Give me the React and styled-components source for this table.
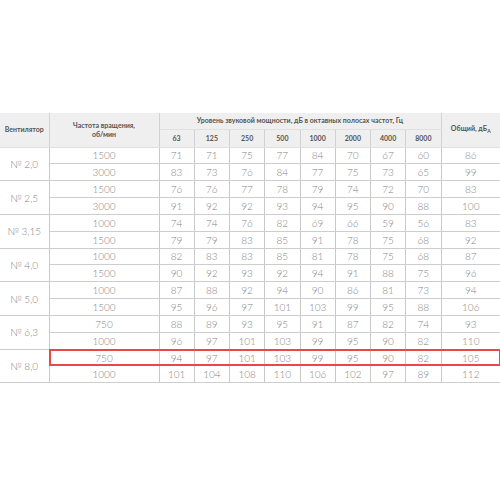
import React from "react";
import styled, { createGlobalStyle, css } from "styled-components";

const Global = createGlobalStyle`
  html, body { margin: 0; padding: 0; background: #ffffff; }
  body { font-family: Lato, "Open Sans", sans-serif; }
`;

const Page = styled.div`
  width: 500px;
  height: 500px;
  padding-top: 113px;
  box-sizing: border-box;
  background: #fff;
`;

const Table = styled.table`
  width: 500px;
  border-collapse: collapse;
  table-layout: fixed;
  font-family: Lato, "Open Sans", sans-serif;
`;

const HeadCell = styled.th`
  background: #efefef;
  color: #555;
  font-size: 7px;
  font-weight: 700;
  line-height: 9px;
  text-align: center;
  vertical-align: middle;
  padding: 0 2px;
  border-left: 1px solid #d2d2d2;
  border-right: 1px solid #d2d2d2;
  border-bottom: 1px solid #e0e0e0;
  &:first-child { border-left: none; }
  &:last-child { border-right: none; }
  ${(p) => p.$edge && css`border-right: 1px solid #d2d2d2; border-left: 1px solid #d2d2d2;`}
`;

const HeadRow = styled.tr`
  height: ${(p) => p.$h}px;
`;

const Row = styled.tr`
  height: 16.85px;
`;

const Cell = styled.td`
  color: #858585;
  font-size: 10px;
  font-weight: 300;
  line-height: 12px;
  text-align: center;
  vertical-align: middle;
  padding: 0;
  border-left: 1px solid #c8c8c8;
  border-right: 1px solid #c8c8c8;
  border-bottom: 1px solid #cdcdcd;
  &:last-child { border-right: none; }
  ${(p) =>
    p.$mark &&
    css`
      position: relative;
      &::after {
        content: "";
        position: absolute;
        left: -1px;
        top: -1px;
        bottom: -1px;
        width: 452px;
        border: 2px solid #e8484b;
        box-sizing: border-box;
        pointer-events: none;
        z-index: 1;
      }
    `}
`;

const FanCell = styled.td`
  color: #858585;
  font-size: 10px;
  font-weight: 300;
  text-align: center;
  vertical-align: middle;
  padding: 0;
  border-right: 1px solid #c8c8c8;
  border-bottom: 1px solid #cdcdcd;
  white-space: nowrap;
`;

const Sub = styled.sub`
  font-size: 5px;
  vertical-align: -2px;
`;

const freqs = ["63", "125", "250", "500", "1000", "2000", "4000", "8000"];

const groups = [
  {
    fan: "№ 2,0",
    rows: [
      ["1500", [71, 71, 75, 77, 84, 70, 67, 60], 86],
      ["3000", [83, 73, 76, 84, 77, 75, 73, 65], 99],
    ],
  },
  {
    fan: "№ 2,5",
    rows: [
      ["1500", [76, 76, 77, 78, 79, 74, 72, 70], 83],
      ["3000", [91, 92, 92, 93, 94, 95, 90, 88], 100],
    ],
  },
  {
    fan: "№ 3,15",
    rows: [
      ["1000", [74, 74, 76, 82, 69, 66, 59, 56], 83],
      ["1500", [79, 79, 83, 85, 91, 78, 75, 68], 92],
    ],
  },
  {
    fan: "№ 4,0",
    rows: [
      ["1000", [82, 83, 83, 85, 81, 78, 75, 68], 87],
      ["1500", [90, 92, 93, 92, 94, 91, 88, 75], 96],
    ],
  },
  {
    fan: "№ 5,0",
    rows: [
      ["1000", [87, 88, 92, 94, 90, 86, 81, 73], 94],
      ["1500", [95, 96, 97, 101, 103, 99, 95, 88], 106],
    ],
  },
  {
    fan: "№ 6,3",
    rows: [
      ["750", [88, 89, 93, 95, 91, 87, 82, 74], 93],
      ["1000", [96, 97, 101, 103, 99, 95, 90, 82], 110],
    ],
  },
  {
    fan: "№ 8,0",
    rows: [
      ["750", [94, 97, 101, 103, 99, 95, 90, 82], 105, true],
      ["1000", [101, 104, 108, 110, 106, 102, 97, 89], 112],
    ],
  },
];

export default function App() {
  return (
    <Page>
      <Global />
      <Table>
        <colgroup>
          <col style={{ width: 49 }} />
          <col style={{ width: 110 }} />
          {freqs.map((f) => (
            <col key={f} style={{ width: 35.25 }} />
          ))}
          <col style={{ width: 59 }} />
        </colgroup>
        <thead>
          <HeadRow $h={16}>
            <HeadCell rowSpan={2}>Вентилятор</HeadCell>
            <HeadCell rowSpan={2}>
              Частота вращения,
              <br />
              об/мин
            </HeadCell>
            <HeadCell colSpan={8}>
              Уровень звуковой мощности, дБ в октавных полосах частот, Гц
            </HeadCell>
            <HeadCell rowSpan={2}>
              Общий, дБ<Sub>A</Sub>
            </HeadCell>
          </HeadRow>
          <HeadRow $h={18}>
            {freqs.map((f) => (
              <HeadCell key={f} $edge>
                {f}
              </HeadCell>
            ))}
          </HeadRow>
        </thead>
        <tbody>
          {groups.map((g) =>
            g.rows.map(([rpm, vals, total, hl], i) => (
              <Row key={g.fan + rpm}>
                {i === 0 && <FanCell rowSpan={2}>{g.fan}</FanCell>}
                <Cell $mark={hl}>{rpm}</Cell>
                {vals.map((v, j) => (
                  <Cell key={j}>{v}</Cell>
                ))}
                <Cell>{total}</Cell>
              </Row>
            ))
          )}
        </tbody>
      </Table>
    </Page>
  );
}
